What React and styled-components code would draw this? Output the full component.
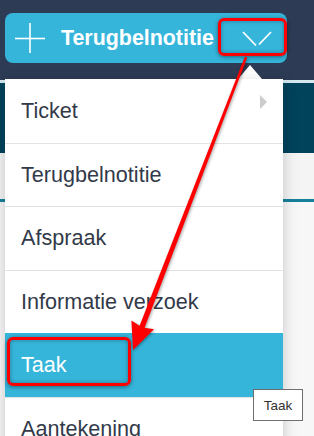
import React from "react"
import styled, { createGlobalStyle } from "styled-components"

const GlobalStyle = createGlobalStyle`
  html, body {
    margin: 0;
    padding: 0;
    background: #ffffff;
  }
  body {
    font-family: "Liberation Sans", Arial, sans-serif;
  }
`

const items = [
  { key: "ticket", label: "Ticket", submenu: true },
  { key: "terug", label: "Terugbelnotitie" },
  { key: "afspraak", label: "Afspraak" },
  { key: "info", label: "Informatie verzoek" },
  { key: "taak", label: "Taak", active: true },
  { key: "aantekening", label: "Aantekening" },
]

const App = () => {
  return (
    <>
      <GlobalStyle />
      <Page>
        <Header>
          <SplitButton>
            <AddIcon>
              <svg width="30" height="30" viewBox="0 0 30 30">
                <line x1="0" y1="15.5" x2="30" y2="15.5" stroke="#fff" strokeWidth="1.6" />
                <line x1="15" y1="0" x2="15" y2="30" stroke="#fff" strokeWidth="1.6" />
              </svg>
            </AddIcon>
            <Label>Terugbelnotitie</Label>
            <Caret>
              <svg width="30" height="16" viewBox="0 0 30 16">
                <line x1="1" y1="1" x2="14" y2="14.5" stroke="#fff" strokeWidth="1.8" />
                <line x1="17" y1="13.5" x2="29" y2="1" stroke="#fff" strokeWidth="1.8" />
              </svg>
            </Caret>
          </SplitButton>
        </Header>
        <Band $h={3} $bg="#d3e9ee" />
        <Band $h={70} $bg="#02435c" />
        <Band $h={46} $bg="#f4f4f4" />
        <Band $h={3} $bg="#16809a" />
        <Band $h={234} $bg="#f7f7f7" />

        <Pointer />
        <Menu>
          {items.map(({ key, ...rest }) => (
            <MenuItem key={key} {...rest} />
          ))}
        </Menu>

        <Tooltip>Taak</Tooltip>

        <Highlight $x={218} $y={18} $w={69} $h={38} />
        <Highlight $x={7} $y={337} $w={124} $h={49} />
        <ArrowLayer width="314" height="436" viewBox="0 0 314 436">
          <polygon
            points="247.2,57.4 144.6,327.8 154,329.2 133,350 131.4,320.4 139.6,325.8 244.9,56.6"
            fill="#ff0000"
          />
        </ArrowLayer>
      </Page>
    </>
  )
}

const MenuItem = ({ label, submenu, active }) => (
  <Item $active={active}>
    {label}
    {submenu && <SubArrow />}
  </Item>
)

const Page = styled.div`
  position: relative;
  width: 314px;
  height: 436px;
  overflow: hidden;
  display: flex;
  flex-direction: column;
`

const Header = styled.div`
  height: 80px;
  flex: none;
  background: #2d3b54;
  padding: 13px 27px 0 5px;
  box-sizing: border-box;
`

const Band = styled.div`
  flex: none;
  height: ${p => p.$h}px;
  background: ${p => p.$bg};
`

const SplitButton = styled.div`
  display: flex;
  align-items: center;
  height: 50px;
  border-radius: 8px;
  background: #36b5db;
  color: #fff;
  padding-left: 10px;
`

const AddIcon = styled.span`
  display: flex;
  width: 30px;
  height: 30px;
  margin-right: 16px;
`

const Label = styled.span`
  flex: 1;
  font-family: "Liberation Sans", Arial, sans-serif;
  font-weight: bold;
  font-size: 21.4px;
  letter-spacing: 0;
  white-space: nowrap;
`

const Caret = styled.span`
  display: flex;
  align-items: center;
  justify-content: center;
  width: 60px;
  height: 100%;
  padding-top: 1px;
  box-sizing: border-box;
`

const Pointer = styled.div`
  position: absolute;
  left: 238px;
  top: 65px;
  width: 0;
  height: 0;
  border-left: 12px solid transparent;
  border-right: 12px solid transparent;
  border-bottom: 14px solid #ffffff;
`

const Menu = styled.div`
  position: absolute;
  left: 5px;
  top: 79px;
  width: 278px;
  background: #ffffff;
  box-shadow: 0 4px 14px rgba(0, 0, 0, 0.2);
`

const Item = styled.div`
  position: relative;
  display: flex;
  align-items: center;
  height: 63.5px;
  box-sizing: border-box;
  padding-left: 16px;
  font-family: "Liberation Sans", Arial, sans-serif;
  font-size: 21.6px;
  color: ${p => (p.$active ? "#ffffff" : "#323a4a")};
  background: ${p => (p.$active ? "#36b5da" : "#ffffff")};
  border-top: 1px solid ${p => (p.$active ? "#36b5da" : "#e3e3e3")};

  &:first-child {
    border-top: none;
  }
`

const SubArrow = styled.span`
  position: absolute;
  right: 16px;
  top: 16px;
  width: 0;
  height: 0;
  border-top: 7px solid transparent;
  border-bottom: 7px solid transparent;
  border-left: 7px solid #cccccc;
`

const Tooltip = styled.div`
  position: absolute;
  left: 253px;
  top: 389px;
  width: 50px;
  height: 32px;
  box-sizing: border-box;
  display: flex;
  align-items: center;
  justify-content: center;
  background: #ffffff;
  border: 1px solid #6f6f6f;
  font-family: "Liberation Sans", Arial, sans-serif;
  font-size: 13.5px;
  color: #333333;
`

const Highlight = styled.div`
  position: absolute;
  left: ${p => p.$x}px;
  top: ${p => p.$y}px;
  width: ${p => p.$w}px;
  height: ${p => p.$h}px;
  box-sizing: border-box;
  border: 3.5px solid #ff0000;
  border-radius: 6px;
  box-shadow: 0 1px 4px rgba(0, 0, 0, 0.45), inset 0 0 4px rgba(0, 0, 0, 0.35);
`

const ArrowLayer = styled.svg`
  position: absolute;
  left: 0;
  top: 0;
  pointer-events: none;
  filter: drop-shadow(1px 1px 1.5px rgba(0, 0, 0, 0.35));
`

export default App
